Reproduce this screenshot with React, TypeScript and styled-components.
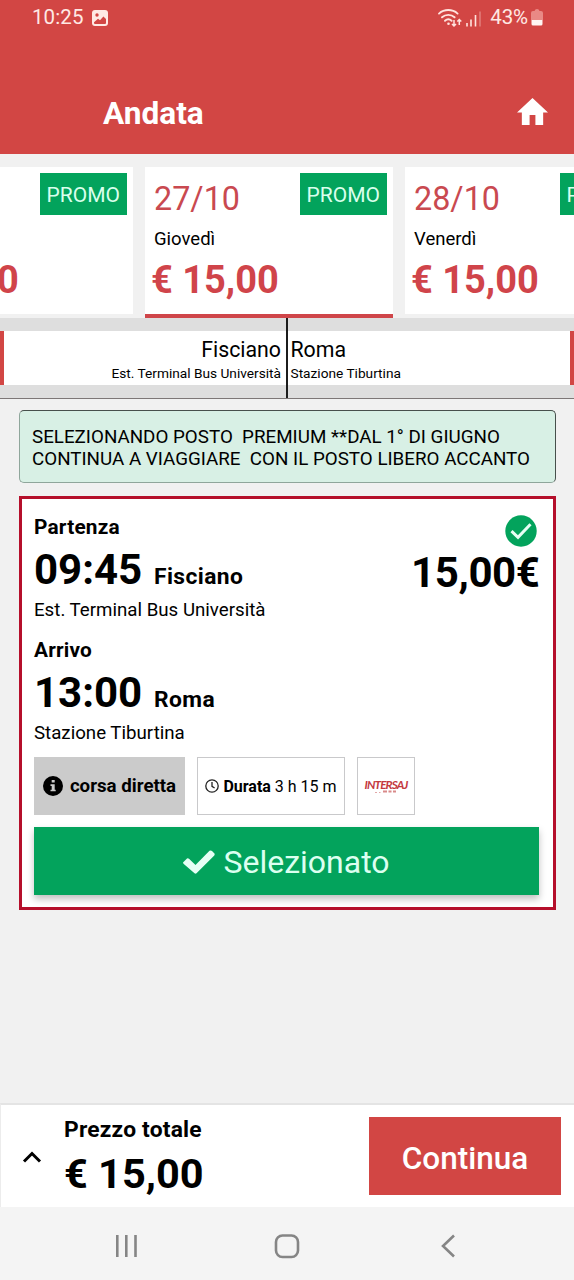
import React from "react";
import styled, { createGlobalStyle } from "styled-components";

const red = "#d24644";
const green = "#03a35c";

const GlobalStyle = createGlobalStyle`
  * { box-sizing: border-box; }
  body { margin: 0; background: #f1f1f1; }
`;

const Screen = styled.div`
  width: 574px;
  height: 1280px;
  overflow: hidden;
  display: flex;
  flex-direction: column;
  background: #f1f1f1;
  color: #000;
  font-family: Roboto, "Liberation Sans", sans-serif;
  white-space: nowrap;
`;

const Header = styled.header`
  flex: none;
  height: 154px;
  background: ${red};
  color: #fff;
`;

const StatusBar = styled.div`
  height: 35px;
  padding: 0 31px 0 32px;
  display: flex;
  justify-content: space-between;
  font-size: 20.5px;
  line-height: 35px;
  color: #ffe9e4;
`;

const StatusGroup = styled.div`
  display: flex;
  align-items: center;
`;

const Clock = styled.span`
  letter-spacing: 0.1px;
  margin-right: 8.5px;
`;

const BatteryLevel = styled.span`
  margin: 0 3px 0 7px;
  letter-spacing: -0.1px;
`;

const TitleRow = styled.div`
  height: 84px;
  margin-top: 35px;
  padding: 0 26px 0 103px;
  display: flex;
  justify-content: space-between;
`;

const Title = styled.h1`
  margin: 24px 0 0;
  font-size: 31.6px;
  line-height: 40px;
  font-weight: 700;
`;

const HomeIcon = styled.svg`
  width: 31px;
  height: 27px;
  margin-top: 28px;
`;

const DateStrip = styled.div`
  flex: none;
  height: 164px;
  padding: 13px 0 0;
  margin-left: -115px;
  display: flex;
  gap: 12px;
`;

const DateCard = styled.div<{ $selected?: boolean }>`
  flex: none;
  width: 248px;
  height: 151px;
  padding: 6px 6px 0 9px;
  background: #fff;
  border-bottom: 4px solid ${(p) => (p.$selected ? "#cf4549" : "#f1f1f1")};
`;

const DateTop = styled.div`
  display: flex;
  justify-content: space-between;
  height: 55px;
`;

const DateLabel = styled.span`
  font-size: 32.3px;
  line-height: 52px;
  color: #c94950;
`;

const Promo = styled.span`
  width: 87.5px;
  height: 42px;
  background: ${green};
  color: #d9ffec;
  font-size: 21px;
  line-height: 44px;
  text-align: center;
`;

const Weekday = styled.div`
  font-size: 18.5px;
  line-height: 22px;
`;

const DatePrice = styled.div`
  margin-left: -3px;
  font-size: 38px;
  line-height: 61px;
  font-weight: 700;
  color: #d0444a;
`;

const RouteBar = styled.div`
  flex: none;
  height: 81px;
  display: grid;
  grid-template-columns: 286px 2px 1fr;
  background: #dedede;
  border-bottom: 1px solid #7d7777;
`;

const Stop = styled.div<{ $side: "from" | "to" }>`
  height: 54px;
  margin: 13px 0;
  padding: 6px ${(p) => (p.$side === "from" ? "5px" : "2.5px")} 0;
  background: #fff;
  text-align: ${(p) => (p.$side === "from" ? "right" : "left")};
  border: 0 solid ${red};
  border-${(p) => (p.$side === "from" ? "left" : "right")}-width: 4px;
`;

const RouteDivider = styled.div`
  background: #1c1c1c;
`;

const StopCity = styled.div`
  font-size: 21.3px;
  line-height: 25px;
`;

const StopPlace = styled.div`
  font-size: 13.7px;
  line-height: 22px;
`;

const Notice = styled.div`
  flex: none;
  height: 73px;
  margin: 11px 18px 0 18.5px;
  padding: 15px 0 0 12.5px;
  border: 1px solid #47504c;
  border-bottom-color: #8fa69b;
  border-left-color: #8fa69b;
  border-radius: 5px;
  background: #d8f0e5;
  font-size: 18.8px;
  line-height: 22px;
  white-space: pre;
`;

const Trip = styled.section`
  flex: none;
  height: 414px;
  margin: 13px 18.5px 0 19px;
  padding: 16px 13px 0 12px;
  border: 3px solid #b50f2b;
  background: #fff;
`;

const TripTop = styled.div`
  display: flex;
  justify-content: space-between;
`;

const LegBox = styled.div`
  height: 123px;
`;

const LegLabel = styled.div`
  font-size: 20.8px;
  line-height: 24px;
  font-weight: 700;
  letter-spacing: 0.2px;
`;

const LegTime = styled.div`
  display: flex;
  align-items: baseline;
  height: 50px;
  margin-top: 6px;
  line-height: 50px;
  font-weight: 700;
`;

const Time = styled.span`
  width: 120px;
  font-size: 42px;
`;

const City = styled.span`
  font-size: 22.8px;
  letter-spacing: 0.4px;
`;

const LegPlace = styled.div`
  margin-top: 2.5px;
  font-size: 18.7px;
  line-height: 24px;
`;

const Fare = styled.div`
  display: flex;
  flex-direction: column;
  align-items: flex-end;
`;

const FareCheck = styled.svg`
  width: 32px;
  height: 32px;
  margin: 0 3px 1px 0;
`;

const FareAmount = styled.div`
  font-size: 42px;
  line-height: 50px;
  font-weight: 700;
  letter-spacing: -0.4px;
`;

const Chips = styled.div`
  display: flex;
  gap: 12px;
  margin-top: -4px;
`;

const Chip = styled.div<{ $width: number; $filled?: boolean }>`
  width: ${(p) => p.$width}px;
  height: 58px;
  display: flex;
  align-items: center;
  justify-content: center;
  border: ${(p) => (p.$filled ? "none" : "1.5px solid #c9c9cb")};
  background: ${(p) => (p.$filled ? "#cbcbcb" : "#fff")};
`;

const DirectText = styled.span`
  margin-left: 7px;
  font-size: 18.7px;
  font-weight: 700;
`;

const DurationText = styled.span`
  margin-left: 4px;
  font-size: 16px;
`;

const Operator = styled.div`
  display: flex;
  flex-direction: column;
  align-items: center;
  font-family: Lato, sans-serif;
  font-size: 11.8px;
  line-height: 11px;
  font-weight: 700;
  font-style: italic;
  letter-spacing: -0.9px;
  color: #c4393f;
`;

const Selected = styled.button`
  width: 505px;
  height: 68px;
  margin-top: 12px;
  padding: 2px 0 0;
  display: flex;
  align-items: center;
  justify-content: center;
  gap: 8px;
  border: none;
  background: ${green};
  color: #dcfff0;
  font: 400 32px Roboto, sans-serif;
  box-shadow: 0 4px 7px rgba(0, 0, 0, 0.25);
`;

const Summary = styled.footer`
  flex: none;
  height: 104px;
  margin-top: auto;
  padding: 0 13px 0 20px;
  display: flex;
  background: #fff;
  border-top: 2px solid #e4e4e4;
  border-left: 1px solid #ececec;
`;

const Caret = styled.svg`
  width: 22px;
  height: 16px;
  margin: 44px 21px 0 0;
`;

const TotalLabel = styled.div`
  margin-top: 12px;
  font-size: 22.8px;
  line-height: 25px;
  font-weight: 700;
  letter-spacing: 0.2px;
`;

const TotalAmount = styled.div`
  margin-top: 7px;
  font-size: 41.5px;
  line-height: 50px;
  font-weight: 700;
`;

const Continue = styled.button`
  width: 192px;
  height: 78px;
  margin: 12px 0 0 auto;
  padding: 4px 0 0;
  border: none;
  background: ${red};
  color: #fff;
  font: 500 31.5px Roboto, sans-serif;
`;

const NavBar = styled.nav`
  flex: none;
  height: 73px;
  padding: 4px 110px 0 110px;
  display: flex;
  align-items: center;
  justify-content: space-between;
  background: #f4f4f4;
`;

const NavIcon = styled.svg`
  width: 32px;
  height: 32px;
  fill: none;
  stroke: #858585;
  stroke-width: 2.6;
`;

const days = [
  { date: "26/10", day: "Mercoledì" },
  { date: "27/10", day: "Giovedì", selected: true },
  { date: "28/10", day: "Venerdì" },
];

function Leg(p: { label: string; time: string; city: string; place: string }) {
  return (
    <LegBox>
      <LegLabel>{p.label}</LegLabel>
      <LegTime>
        <Time>{p.time}</Time>
        <City>{p.city}</City>
      </LegTime>
      <LegPlace>{p.place}</LegPlace>
    </LegBox>
  );
}

export default function App() {
  return (
    <Screen>
      <GlobalStyle />
      <Header>
        <StatusBar>
          <StatusGroup>
            <Clock>10:25</Clock>
            <svg width="16" height="16" viewBox="0 0 16 16">
              <rect width="16" height="16" rx="3" fill="#ffe9e4" />
              <circle cx="5" cy="5" r="1.7" fill={red} />
              <path d="M2 12.2 6 8.8l2 1.4 3.4-3.7L14 9v4q0 1-1 1H3q-1 0-1-1z" fill={red} />
            </svg>
          </StatusGroup>
          <StatusGroup>
            <svg width="46" height="20" viewBox="0 0 46 20" fill="none" stroke="#ffe3de">
              <g strokeWidth="1.9" strokeLinecap="round">
                <path d="M2 5.6a14 14 0 0 1 18.6 0" />
                <path d="M5 9.3a9.4 9.4 0 0 1 12.6 0" />
                <path d="M8 12.8a5 5 0 0 1 6.6 0" />
              </g>
              <circle cx="11.5" cy="15.8" r="1.3" fill="#ffe3de" stroke="none" />
              <path d="M17 12v6M15 16l2 2 2-2M22.3 17v-5.5M20.3 13.5l2-2 2 2" strokeWidth="1.5" />
              <path d="M30 18.5v-3.5M34 18.5V11.5M38.500 18.5V7" strokeWidth="1.6" />
              <path d="M43 18.5V3.5" strokeWidth="1.6" opacity="0.35" />
            </svg>
            <BatteryLevel>43%</BatteryLevel>
            <svg width="12" height="17" viewBox="0 0 12 17">
              <path d="M0 11V4q0-2 2-2h1.500Q4 0 6 0t2.500 2H10q2 0 2 2v7z" fill="#e98985" />
              <path d="M0.500 11h11v4q0 1.500-1.500 1.500H2Q.5 16.500.5 15z" fill="#fff5f2" />
            </svg>
          </StatusGroup>
        </StatusBar>
        <TitleRow>
          <Title>Andata</Title>
          <HomeIcon viewBox="0 0 32 27" preserveAspectRatio="none">
            <path d="M16 0 32 14.500H27V27H19V17H13V27H5V14.500H0Z" fill="#fff" />
          </HomeIcon>
        </TitleRow>
      </Header>

      <DateStrip>
        {days.map((d) => (
          <DateCard key={d.date} $selected={d.selected}>
            <DateTop>
              <DateLabel>{d.date}</DateLabel>
              <Promo>PROMO</Promo>
            </DateTop>
            <Weekday>{d.day}</Weekday>
            <DatePrice>€ 15,00</DatePrice>
          </DateCard>
        ))}
      </DateStrip>

      <RouteBar>
        <Stop $side="from">
          <StopCity>Fisciano</StopCity>
          <StopPlace>Est. Terminal Bus Università</StopPlace>
        </Stop>
        <RouteDivider />
        <Stop $side="to">
          <StopCity>Roma</StopCity>
          <StopPlace>Stazione Tiburtina</StopPlace>
        </Stop>
      </RouteBar>

      <Notice>
        {"SELEZIONANDO POSTO  PREMIUM **DAL 1° DI GIUGNO\nCONTINUA A VIAGGIARE  CON IL POSTO LIBERO ACCANTO"}
      </Notice>

      <Trip>
        <TripTop>
          <Leg label="Partenza" time="09:45" city="Fisciano" place="Est. Terminal Bus Università" />
          <Fare>
            <FareCheck viewBox="0 0 32 32">
              <circle cx="16" cy="16" r="15.700" fill={green} />
              <path d="M6.500 16.200 13 22.300 25.500 9.200" fill="none" stroke="#e6fff4" strokeWidth="3" />
            </FareCheck>
            <FareAmount>15,00€</FareAmount>
          </Fare>
        </TripTop>
        <Leg label="Arrivo" time="13:00" city="Roma" place="Stazione Tiburtina" />
        <Chips>
          <Chip $width={151} $filled>
            <svg width="20" height="20" viewBox="0 0 20 20">
              <circle cx="10" cy="10" r="10" />
              <path d="M8.700 4h3v2.500h-3zM7.500 8.300h4.200v5.400h1v1.600H7.500v-1.600h1.200V9.900H7.500z" fill="#cbcbcb" />
            </svg>
            <DirectText>corsa diretta</DirectText>
          </Chip>
          <Chip $width={148}>
            <svg width="14" height="14" viewBox="0 0 14 14" fill="none" stroke="#222" strokeWidth="1.300">
              <circle cx="7" cy="7" r="6.200" />
              <path d="M7 3v4.300l2.600 1.700" />
            </svg>
            <DurationText>
              <b>Durata</b> 3 h 15 m
            </DurationText>
          </Chip>
          <Chip $width={58}>
            <Operator>
              INTERSAJ
              <svg width="24" height="3" viewBox="0 0 24 3" fill="#d98a8a">
                <path d="M1 2h2v.7H1zM5 2h1.500v.7H5zM9 .5h4V2.500H9zM14.500.5h3V2.500h-3zM19 .5h3V2.500h-3z" />
              </svg>
            </Operator>
          </Chip>
        </Chips>
        <Selected>
          <svg width="32" height="24" viewBox="0 0 32 24">
            <path d="M0 12.500 4 8.500Q5 8 6 8.800L12.500 15 26.500.8Q28 0 29 1L31.500 3.500Q32 4.500 31.300 5.500L13.500 23.300Q12.500 24 11.500 23.300L.5 13.800Q0 13 0 12.500Z" fill="#e6fff5" />
          </svg>
          Selezionato
        </Selected>
      </Trip>

      <Summary>
        <Caret viewBox="0 0 22 16">
          <path d="M3 12.500 11 4.500 19 12.500" fill="none" stroke="#000" strokeWidth="3" />
        </Caret>
        <div>
          <TotalLabel>Prezzo totale</TotalLabel>
          <TotalAmount>€ 15,00</TotalAmount>
        </div>
        <Continue>Continua</Continue>
      </Summary>

      <NavBar>
        <NavIcon viewBox="0 0 32 32">
          <path d="M7.300 5v22M16.300 5v22M25.500 5v22" />
        </NavIcon>
        <NavIcon viewBox="0 0 32 32">
          <rect x="5" y="5.500" width="22" height="21.500" rx="6.500" />
        </NavIcon>
        <NavIcon viewBox="0 0 32 32">
          <path d="M22 5.500 11 16 22 26.500" />
        </NavIcon>
      </NavBar>
    </Screen>
  );
}
